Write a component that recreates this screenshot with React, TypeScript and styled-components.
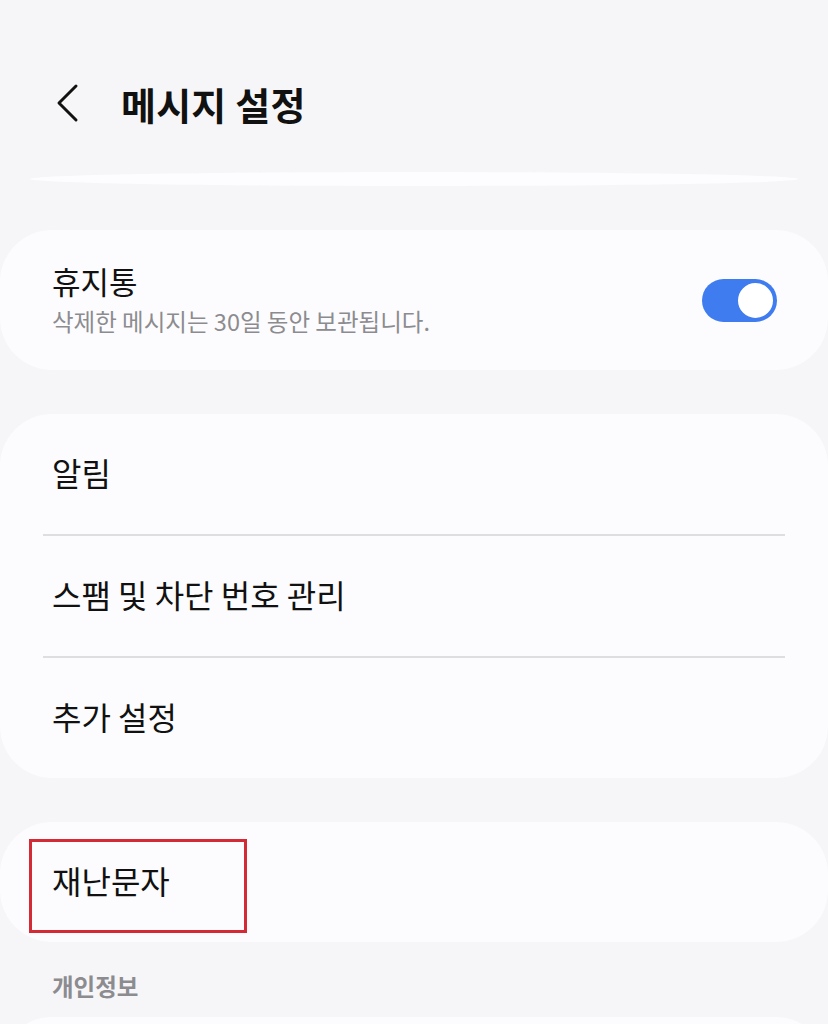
import React from "react";
import styled, { createGlobalStyle } from "styled-components";

const Global = createGlobalStyle`
  html, body { margin: 0; padding: 0; background: #f6f6f8; }
  body { font-family: "Noto Sans CJK KR", "Noto Sans", sans-serif; color: #111; }
`;

const Page = styled.div`
  width: 828px;
  height: 1024px;
  overflow: hidden;
  background: #f6f6f8;
`;

const Header = styled.div`
  display: flex;
  align-items: center;
  height: 66px;
  padding: 70px 0 0 55px;
  gap: 40px;
`;

const Title = styled.h1`
  margin: 0;
  font-size: 38px;
  font-weight: 700;
  letter-spacing: 0.2px;
  color: #111;
`;

const Sliver = styled.div`
  margin: 36px 30px 0;
  height: 14px;
  background: #fdfdff;
  border-radius: 50%;
`;

const Card = styled.div<{ $mt?: number }>`
  position: relative;
  margin-top: ${(p) => p.$mt ?? 44}px;
  background: #fcfcfe;
  border-radius: 52px;
`;

const ToggleRow = styled.div`
  display: flex;
  align-items: center;
  justify-content: space-between;
  height: 140px;
  padding: 0 51px 0 52px;
`;

const TextBlock = styled.div`
  display: flex;
  flex-direction: column;
  margin-top: -3px;
`;

const ItemTitle = styled.div`
  font-size: 31px;
  line-height: 40px;
  color: #111;
`;

const Sub = styled.div`
  margin-top: 5px;
  font-size: 23.5px;
  line-height: 30px;
  color: #8c8c90;
`;

const Track = styled.div`
  position: relative;
  width: 75px;
  height: 43px;
  border-radius: 22px;
  background: #3f7cf0;
`;

const Knob = styled.div`
  position: absolute;
  right: 1px;
  top: 1px;
  width: 35px;
  height: 35px;
  border-radius: 50%;
  background: #fff;
  border: 3px solid #3f7cf0;
`;

const Row = styled.div`
  display: flex;
  align-items: center;
  box-sizing: border-box;
  height: 120px;
  padding: 0 52px 5px;
  font-size: 32px;
  color: #111;
`;

const Divider = styled.div`
  height: 2px;
  margin: 0 43px;
  background: #dedee1;
`;

const Highlight = styled.div`
  position: absolute;
  left: 29px;
  top: 17px;
  width: 212px;
  height: 88px;
  border: 3px solid #d42a36;
`;

const SectionLabel = styled.div`
  margin: 29px 0 0 52px;
  font-size: 23.5px;
  line-height: 30px;
  font-weight: 700;
  color: #8c8c90;
`;

const Back = () => (
  <svg width="26" height="40" viewBox="0 0 26 40">
    <path d="M21 3 L4 20 L21 37" fill="none" stroke="#111" strokeWidth="3" strokeLinecap="round" strokeLinejoin="round" />
  </svg>
);

export default function App() {
  return (
    <Page>
      <Global />
      <Header>
        <Back />
        <Title>메시지 설정</Title>
      </Header>
      <Sliver />
      <Card>
        <ToggleRow>
          <TextBlock>
            <ItemTitle>휴지통</ItemTitle>
            <Sub>삭제한 메시지는 30일 동안 보관됩니다.</Sub>
          </TextBlock>
          <Track>
            <Knob />
          </Track>
        </ToggleRow>
      </Card>
      <Card>
        <Row>알림</Row>
        <Divider />
        <Row>스팸 및 차단 번호 관리</Row>
        <Divider />
        <Row>추가 설정</Row>
      </Card>
      <Card>
        <Row>재난문자</Row>
        <Highlight />
      </Card>
      <SectionLabel>개인정보</SectionLabel>
      <Card $mt={16}>
        <Row />
      </Card>
    </Page>
  );
}
